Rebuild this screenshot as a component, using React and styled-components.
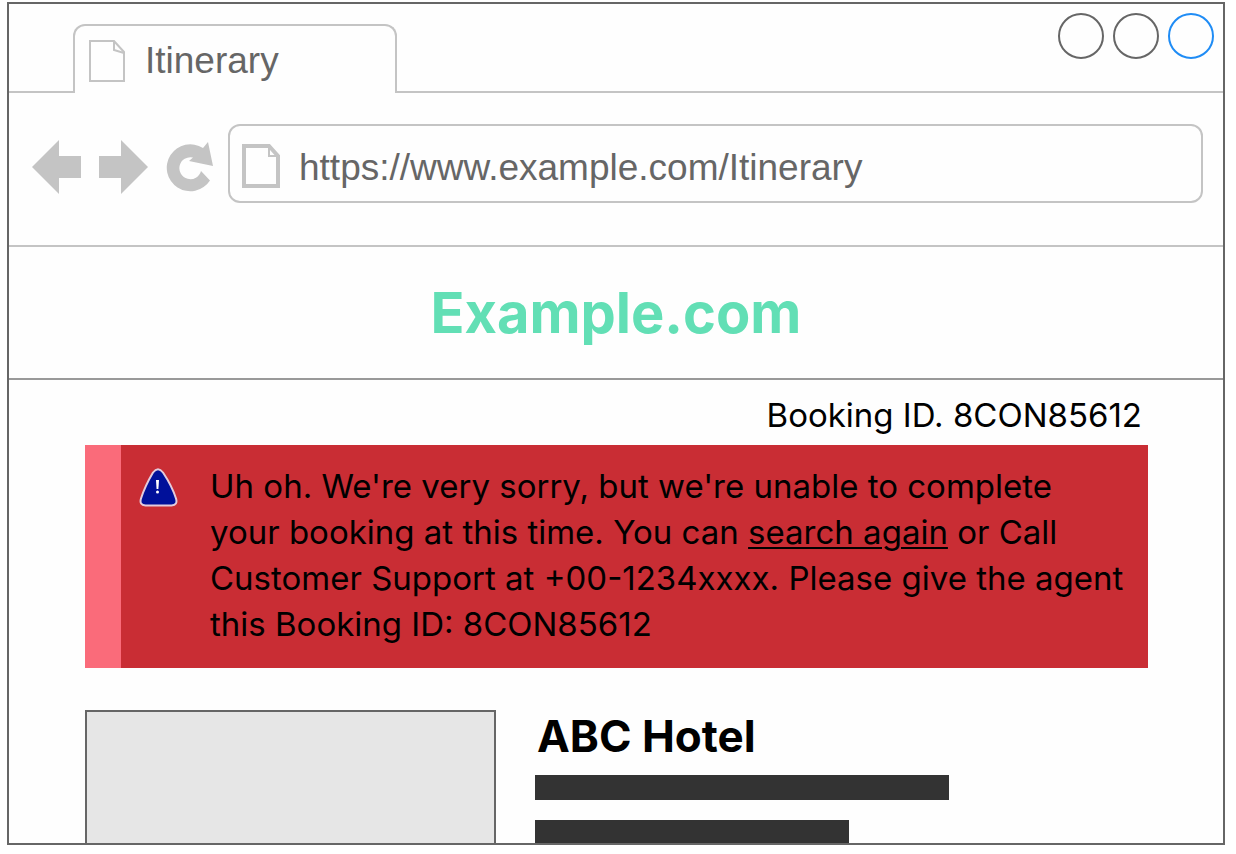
import React, { useState } from "react";
import styled, { createGlobalStyle } from "styled-components";

const GlobalStyle = createGlobalStyle`
  * {
    box-sizing: border-box;
  }
  body {
    margin: 0;
    background: #fff;
    color: #000;
    font-family: Inter, "Century Gothic", sans-serif;
  }
  button {
    padding: 0;
    border: 0;
    background: none;
    cursor: pointer;
  }
`;

const Page = styled.div`
  height: 100vh;
  padding: 2px 11px 9px 7px;
`;

const BrowserWindow = styled.div`
  height: 100%;
  overflow: hidden;
  border: 2px solid #666;
  background: #fefefe;
`;

const TabBar = styled.div`
  display: flex;
  justify-content: space-between;
  height: 89px;
  padding: 9px 9px 0 64px;
  border-bottom: 2px solid #c4c4c4;
`;

const Tab = styled.div`
  display: flex;
  align-items: center;
  gap: 20px;
  width: 324px;
  margin: 11px 0 -2px;
  padding: 2px 14px 0;
  border: 2px solid #c4c4c4;
  border-bottom: 0;
  border-radius: 12px 12px 0 0;
  background: #fefefe;
  color: #666;
  font-family: "Liberation Sans", Arial, sans-serif;
  font-size: 37px;
`;

const WindowControls = styled.div`
  display: flex;
  gap: 9px;

  button {
    width: 46px;
    height: 46px;
    border: 2px solid #666;
    border-radius: 50%;
  }
  button:last-child {
    border-color: #1f8cf5;
  }
`;

const Toolbar = styled.div`
  display: flex;
  height: 154px;
  padding: 31px 20px 0 23px;
  border-bottom: 2px solid #c4c4c4;
`;

const NavButtons = styled.nav`
  display: flex;
  align-items: flex-start;
  gap: 18px;
  padding: 16px 15px 0 0;

  svg {
    display: block;
    fill: #c4c4c4;
  }
`;

const AddressBar = styled.label`
  display: flex;
  flex: 1;
  align-items: center;
  gap: 19px;
  min-width: 0;
  height: 79px;
  padding: 4px 12px 0;
  border: 2px solid #c4c4c4;
  border-radius: 12px;

  svg {
    flex: none;
  }
  input {
    flex: 1;
    min-width: 0;
    padding: 4px 0 0;
    border: 0;
    outline: 0;
    background: none;
    color: #666;
    font-family: "Liberation Sans", Arial, sans-serif;
    font-size: 37px;
  }
`;

const SiteHeader = styled.header`
  display: flex;
  align-items: center;
  justify-content: center;
  height: 133px;
  border-bottom: 2px solid #999;

  h1 {
    margin: 0;
    color: #62dfb5;
    font-size: 56px;
    font-weight: 700;
  }
`;

const Content = styled.main`
  padding: 12px 75px 0 76px;
`;

const BookingId = styled.p`
  margin: 0;
  padding: 0 6px 7px 0;
  font-size: 33px;
  line-height: 46px;
  text-align: right;
`;

const Alert = styled.div`
  display: flex;
  align-items: flex-start;
  gap: 32px;
  padding: 18px 20px 21px 18px;
  border-left: 36px solid #fa6b7a;
  background: #c92d34;

  svg {
    flex: none;
    margin-top: 5px;
  }
  p {
    margin: 0;
    font-size: 33px;
    line-height: 46px;
  }
  a {
    color: inherit;
    text-decoration-thickness: 2px;
    text-underline-offset: 3px;
  }
`;

const Hotel = styled.section`
  display: flex;
  gap: 39px;
  margin-top: 42px;
`;

const HotelPhoto = styled.div`
  flex: 0 0 411px;
  height: 300px;
  border: 2px solid #666;
  background: #e6e6e6;
`;

const HotelDetails = styled.div`
  flex: 1;

  h2 {
    margin: 0 0 13px;
    padding-left: 2px;
    font-size: 44px;
    line-height: 52px;
    font-weight: 700;
  }
`;

const TextBar = styled.div`
  width: ${({ $width }) => $width}px;
  max-width: 100%;
  height: 25px;
  margin-bottom: 20px;
  background: #333;
`;

const BackIcon = () => (
  <svg width="49" height="54" viewBox="0 0 49 54">
    <path d="M0 27 27 0v16h22v22H27v16z" />
  </svg>
);

const ForwardIcon = () => (
  <svg width="49" height="54" viewBox="0 0 49 54">
    <path d="M49 27 22 0v16H0v22h22v16z" />
  </svg>
);

const ReloadIcon = () => (
  <svg width="47" height="54" viewBox="0 0 47 54">
    <path d="M44 40.500A23.500 23.500 0 1 1 37 8L42 2l5 24-24-5 4-3.500A11 11 0 1 0 35 31z" />
  </svg>
);

const PageIcon = () => (
  <svg width="36" height="42" viewBox="0 0 36 42" fill="none" stroke="#c4c4c4" strokeWidth="2">
    <path d="M1 1h24l10 11v29H1z" />
    <path d="M25 1v9l10 3" />
  </svg>
);

const SecurePageIcon = () => (
  <svg width="38" height="44" viewBox="0 0 38 44" fill="none" stroke="#c4c4c4">
    <path strokeWidth="4" d="M2 2h25l9 10v30H2z" />
    <path strokeWidth="2" d="M27 3v9h8" />
  </svg>
);

const WarningIcon = () => (
  <svg width="39" height="39" viewBox="0 0 39 39">
    <path
      d="M14 4.500Q19 -2 24 4.500 33 18 37 30.500 39 37 32.500 37.500H6.500Q0 37 2 30.500 6 18 14 4.500z"
      fill="#00109a"
      stroke="#e3cbdc"
      strokeWidth="2"
    />
    <path d="M17 12h3l-.6 9h-1.800z" fill="#fff" />
    <circle cx="18.500" cy="24" r="1.500" fill="#fff" />
  </svg>
);

const App = () => {
  const [url, setUrl] = useState("https://www.example.com/Itinerary");

  return (
    <Page>
      <GlobalStyle />
      <BrowserWindow>
        <TabBar>
          <Tab>
            <PageIcon />
            <span>Itinerary</span>
          </Tab>
          <WindowControls>
            <button aria-label="Minimize" />
            <button aria-label="Maximize" />
            <button aria-label="Close" />
          </WindowControls>
        </TabBar>
        <Toolbar>
          <NavButtons>
            <button aria-label="Back">
              <BackIcon />
            </button>
            <button aria-label="Forward">
              <ForwardIcon />
            </button>
            <button aria-label="Reload">
              <ReloadIcon />
            </button>
          </NavButtons>
          <AddressBar>
            <SecurePageIcon />
            <input
              type="text"
              aria-label="Address"
              value={url}
              onChange={(e) => setUrl(e.target.value)}
            />
          </AddressBar>
        </Toolbar>
        <SiteHeader>
          <h1>Example.com</h1>
        </SiteHeader>
        <Content>
          <BookingId>Booking ID. 8CON85612</BookingId>
          <Alert role="alert">
            <WarningIcon />
            <p>
              Uh oh. We're very sorry, but we're unable to complete your booking
              at this time. You can <a href="#search">search again</a> or Call
              Customer Support at +00-1234xxxx. Please give the agent this
              Booking ID: 8CON85612
            </p>
          </Alert>
          <Hotel>
            <HotelPhoto />
            <HotelDetails>
              <h2>ABC Hotel</h2>
              <TextBar $width={414} />
              <TextBar $width={314} />
            </HotelDetails>
          </Hotel>
        </Content>
      </BrowserWindow>
    </Page>
  );
};

export default App;
